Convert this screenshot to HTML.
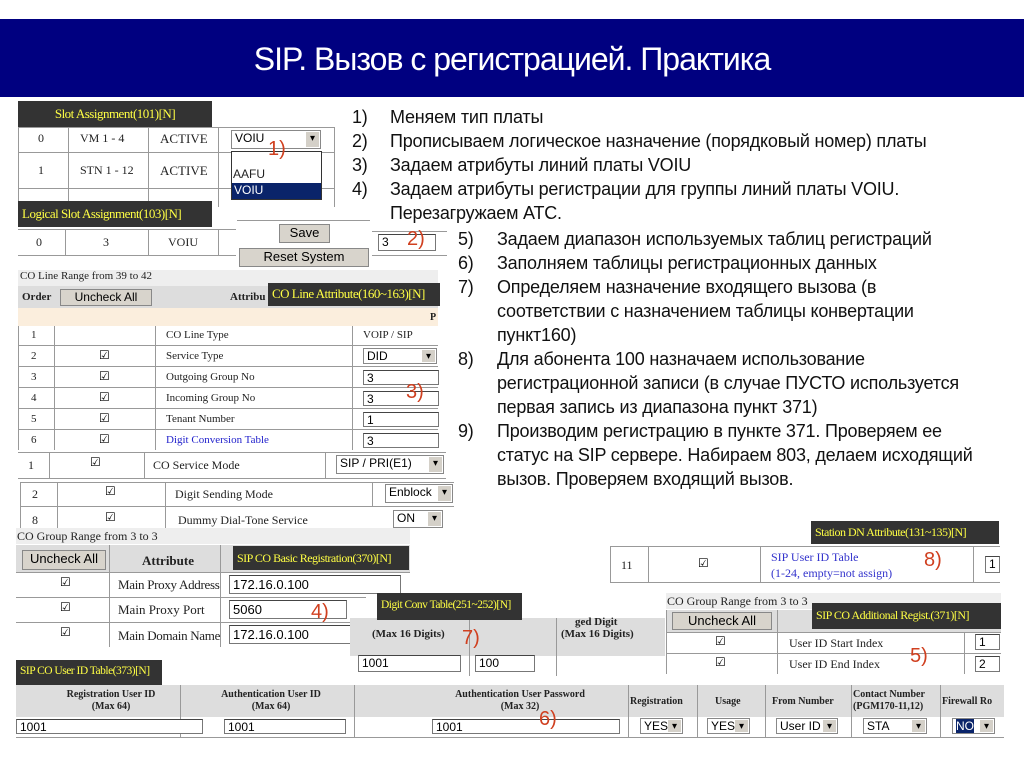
<!DOCTYPE html><html><head><meta charset="utf-8"><style>
body{margin:0;width:1024px;height:767px;background:#fff;position:relative;overflow:hidden;font-family:"Liberation Serif",serif;}
.a{position:absolute;box-sizing:border-box}
.lab{position:absolute;background:#333;color:#ffff44;font:13px "Liberation Serif",serif;padding:3px 4px;white-space:nowrap;box-sizing:border-box;letter-spacing:-0.5px;overflow:hidden}
.t{position:absolute;font:12px "Liberation Serif",serif;color:#222;white-space:nowrap}
.s{position:absolute;font:12px "Liberation Sans",sans-serif;color:#222;white-space:nowrap}
.in{position:absolute;border:1px solid #777;border-top-color:#444;background:#fff;font:12px "Liberation Sans",sans-serif;padding-left:3px;box-sizing:border-box;line-height:14px}
.sel{position:absolute;border:1px solid #888;background:#fff;font:12px "Liberation Sans",sans-serif;padding-left:3px;box-sizing:border-box;line-height:14px}
.sel:after{content:"▾";position:absolute;right:1px;top:1px;width:13px;height:calc(100% - 2px);background:#d4d0c8;font-size:10px;text-align:center;line-height:14px;color:#000}
.btn{position:absolute;background:#d8d4cc;border:1px solid #888;font:13px "Liberation Sans",sans-serif;text-align:center;box-sizing:border-box}
.hl{position:absolute;height:1px;background:#999}
.vl{position:absolute;width:1px;background:#999}
.cb{position:absolute;font:12px "DejaVu Sans",sans-serif}
.r{position:absolute;color:#d04020;font:20px "Liberation Sans",sans-serif}
.txt{position:absolute;font:18px "Liberation Sans",sans-serif;color:#111;line-height:24px;white-space:nowrap;letter-spacing:-0.2px}
.gr{position:absolute;background:#ddd}
</style></head><body>
<div class="a" style="left:0;top:19px;width:1024px;height:78px;background:#000080"></div>
<div class="a" style="left:0;top:41px;width:1024px;text-align:center;color:#fff;font:32px 'Liberation Sans',sans-serif;letter-spacing:-1px">SIP. Вызов с регистрацией. Практика</div>

<!-- right text -->
<div class="txt" style="left:352px;top:105px">1)<br>2)<br>3)<br>4)</div>
<div class="txt" style="left:390px;top:105px">Меняем тип платы<br>Прописываем логическое назначение (порядковый номер) платы<br>Задаем атрибуты линий платы VOIU<br>Задаем атрибуты регистрации для группы линий платы VOIU.<br>Перезагружаем АТС.</div>
<div class="txt" style="left:458px;top:227px">5)<br>6)<br>7)<br><br><br>8)<br><br><br>9)</div>
<div class="txt" style="left:497px;top:227px">Задаем диапазон используемых таблиц регистраций<br>Заполняем таблицы регистрационных данных<br>Определяем назначение входящего вызова (в<br>соответствии с назначением таблицы конвертации<br>пункт160)<br>Для абонента 100 назначаем использование<br>регистрационной записи (в случае ПУСТО используется<br>первая запись из диапазона пункт 371)<br>Производим регистрацию в пункте 371. Проверяем ее<br>статус на SIP сервере. Набираем 803, делаем исходящий<br>вызов. Проверяем входящий вызов.</div>

<!-- slot assignment -->
<div class="lab" style="left:18px;top:101px;width:194px;height:26px;text-align:center;padding-top:5px">Slot Assignment(101)[N]</div>
<div class="hl" style="left:18px;top:127px;width:317px"></div>
<div class="hl" style="left:18px;top:152px;width:317px"></div>
<div class="hl" style="left:18px;top:188px;width:317px"></div>
<div class="vl" style="left:18px;top:127px;height:80px"></div>
<div class="vl" style="left:68px;top:127px;height:80px"></div>
<div class="vl" style="left:148px;top:127px;height:80px"></div>
<div class="vl" style="left:218px;top:127px;height:80px"></div>
<div class="vl" style="left:334px;top:127px;height:80px"></div>
<div class="t" style="left:38px;top:131px">0</div><div class="t" style="left:80px;top:131px">VM 1 - 4</div><div class="t" style="left:160px;top:131px;font-size:13px">ACTIVE</div>
<div class="t" style="left:38px;top:163px">1</div><div class="t" style="left:80px;top:163px">STN 1 - 12</div><div class="t" style="left:160px;top:163px;font-size:13px">ACTIVE</div>
<div class="sel" style="left:231px;top:130px;width:90px;height:19px">VOIU</div>
<div class="a" style="left:231px;top:151px;width:91px;height:49px;border:1px solid #333;background:#fff"></div>
<div class="s" style="left:233px;top:167px">AAFU</div>
<div class="a" style="left:232px;top:183px;width:89px;height:16px;background:#0a246a;color:#fff;font:12px 'Liberation Sans',sans-serif;padding-left:2px">VOIU</div>
<div class="r" style="left:268px;top:138px">1)</div>

<div class="lab" style="left:18px;top:201px;width:194px;height:26px;padding-top:5px">Logical Slot Assignment(103)[N]</div>
<div class="hl" style="left:18px;top:229px;width:218px"></div>
<div class="hl" style="left:18px;top:255px;width:218px"></div>
<div class="vl" style="left:65px;top:229px;height:26px"></div><div class="vl" style="left:148px;top:229px;height:26px"></div><div class="vl" style="left:218px;top:229px;height:26px"></div>
<div class="t" style="left:36px;top:235px">0</div><div class="t" style="left:103px;top:235px">3</div><div class="t" style="left:168px;top:235px">VOIU</div>
<div class="hl" style="left:237px;top:220px;width:133px"></div>
<div class="btn" style="left:279px;top:224px;width:51px;height:19px">Save</div>
<div class="btn" style="left:239px;top:248px;width:130px;height:19px">Reset System</div>
<div class="hl" style="left:372px;top:231px;width:75px"></div>
<div class="hl" style="left:372px;top:255px;width:75px"></div>
<div class="in" style="left:378px;top:234px;width:58px;height:17px">3</div>
<div class="r" style="left:407px;top:228px">2)</div>

<!-- CO line range -->
<div class="gr" style="left:18px;top:270px;width:420px;height:16px;background:#eee"></div>
<div class="t" style="left:20px;top:270px;font-size:11px">CO Line Range from 39 to 42</div>
<div class="gr" style="left:18px;top:286px;width:420px;height:22px;background:#ddd"></div>
<div class="t" style="left:22px;top:291px;font-weight:bold;font-size:11px">Order</div>
<div class="btn" style="left:60px;top:289px;width:92px;height:17px;font-size:12px">Uncheck All</div>
<div class="t" style="left:230px;top:291px;font-weight:bold;font-size:11px">Attribu</div>
<div class="lab" style="left:268px;top:283px;width:172px;height:23px;font-size:13px;padding-top:3px">CO Line Attribute(160~163)[N]</div>
<div class="a" style="left:18px;top:308px;width:420px;height:18px;background:#fbeedd"></div>
<div class="t" style="left:430px;top:312px;font-weight:bold;font-size:10px">P</div>
<div class="vl" style="left:18px;top:326px;height:124px"></div>
<div class="vl" style="left:54px;top:326px;height:124px"></div>
<div class="vl" style="left:155px;top:326px;height:124px"></div>
<div class="vl" style="left:352px;top:326px;height:124px"></div>
<div class="hl" style="left:18px;top:345px;width:420px"></div>
<div class="hl" style="left:18px;top:366px;width:420px"></div>
<div class="hl" style="left:18px;top:387px;width:420px"></div>
<div class="hl" style="left:18px;top:408px;width:420px"></div>
<div class="hl" style="left:18px;top:429px;width:420px"></div>
<div class="t" style="left:31px;top:329px;font-size:11px">1</div><div class="t" style="left:166px;top:329px;font-size:11px">CO Line Type</div><div class="t" style="left:363px;top:329px;font-size:11px">VOIP / SIP</div>
<div class="t" style="left:31px;top:350px;font-size:11px">2</div><div class="cb" style="left:99px;top:348px">☑</div><div class="t" style="left:166px;top:350px;font-size:11px">Service Type</div><div class="sel" style="left:363px;top:348px;width:74px;height:16px">DID</div>
<div class="t" style="left:31px;top:371px;font-size:11px">3</div><div class="cb" style="left:99px;top:369px">☑</div><div class="t" style="left:166px;top:371px;font-size:11px">Outgoing Group No</div><div class="in" style="left:363px;top:370px;width:76px;height:15px">3</div>
<div class="t" style="left:31px;top:392px;font-size:11px">4</div><div class="cb" style="left:99px;top:390px">☑</div><div class="t" style="left:166px;top:392px;font-size:11px">Incoming Group No</div><div class="in" style="left:363px;top:391px;width:76px;height:15px">3</div>
<div class="t" style="left:31px;top:413px;font-size:11px">5</div><div class="cb" style="left:99px;top:411px">☑</div><div class="t" style="left:166px;top:413px;font-size:11px">Tenant Number</div><div class="in" style="left:363px;top:412px;width:76px;height:15px">1</div>
<div class="t" style="left:31px;top:434px;font-size:11px">6</div><div class="cb" style="left:99px;top:432px">☑</div><div class="t" style="left:166px;top:434px;font-size:11px;color:#22c">Digit Conversion Table</div><div class="in" style="left:363px;top:433px;width:76px;height:15px">3</div>
<div class="r" style="left:406px;top:381px">3)</div>

<div class="hl" style="left:18px;top:452px;width:428px"></div><div class="hl" style="left:18px;top:478px;width:428px"></div>
<div class="vl" style="left:49px;top:452px;height:26px"></div><div class="vl" style="left:144px;top:452px;height:26px"></div><div class="vl" style="left:325px;top:452px;height:26px"></div>
<div class="t" style="left:28px;top:458px">1</div><div class="cb" style="left:90px;top:455px">☑</div><div class="t" style="left:153px;top:458px">CO Service Mode</div><div class="sel" style="left:336px;top:455px;width:108px;height:19px">SIP / PRI(E1)</div>
<div class="hl" style="left:20px;top:482px;width:434px"></div><div class="hl" style="left:20px;top:506px;width:434px"></div>
<div class="vl" style="left:20px;top:482px;height:46px"></div><div class="vl" style="left:57px;top:482px;height:46px"></div><div class="vl" style="left:165px;top:482px;height:46px"></div><div class="vl" style="left:372px;top:482px;height:24px"></div>
<div class="t" style="left:32px;top:487px">2</div><div class="cb" style="left:105px;top:484px">☑</div><div class="t" style="left:175px;top:487px">Digit Sending Mode</div><div class="sel" style="left:385px;top:484px;width:68px;height:19px">Enblock</div>
<div class="t" style="left:32px;top:513px">8</div><div class="cb" style="left:105px;top:510px">☑</div><div class="t" style="left:178px;top:513px">Dummy Dial-Tone Service</div><div class="sel" style="left:393px;top:510px;width:50px;height:18px">ON</div>

<!-- CO group / 370 -->
<div class="a" style="left:16px;top:528px;width:394px;height:16px;background:#eee"></div>
<div class="t" style="left:17px;top:529px">CO Group Range from 3 to 3</div>
<div class="a" style="left:16px;top:545px;width:394px;height:27px;background:#ddd"></div>
<div class="btn" style="left:22px;top:550px;width:84px;height:20px">Uncheck All</div>
<div class="t" style="left:142px;top:553px;font-weight:bold;font-size:13px">Attribute</div>
<div class="lab" style="left:233px;top:546px;width:176px;height:24px;font-size:12px;padding-top:5px">SIP CO Basic Registration(370)[N]</div>
<div class="hl" style="left:16px;top:572px;width:394px"></div><div class="hl" style="left:16px;top:597px;width:350px"></div><div class="hl" style="left:16px;top:622px;width:350px"></div>
<div class="vl" style="left:109px;top:545px;height:102px"></div><div class="vl" style="left:220px;top:545px;height:102px"></div>
<div class="cb" style="left:60px;top:575px">☑</div><div class="t" style="left:118px;top:577px;font-size:13px;letter-spacing:-0.3px">Main Proxy Address</div><div class="in" style="left:229px;top:575px;width:172px;height:19px;font-size:13px;line-height:17px">172.16.0.100</div>
<div class="cb" style="left:60px;top:600px">☑</div><div class="t" style="left:118px;top:602px;font-size:13px">Main Proxy Port</div><div class="in" style="left:229px;top:600px;width:118px;height:19px;font-size:13px;line-height:17px">5060</div>
<div class="cb" style="left:60px;top:625px">☑</div><div class="t" style="left:118px;top:628px;font-size:13px;letter-spacing:-0.3px">Main Domain Name</div><div class="in" style="left:229px;top:625px;width:130px;height:19px;font-size:13px;line-height:17px">172.16.0.100</div>
<div class="r" style="left:311px;top:601px">4)</div>

<!-- digit conv -->
<div class="a" style="left:350px;top:618px;width:315px;height:38px;background:#ddd"></div>
<div class="a" style="left:350px;top:656px;width:315px;height:20px;background:#fff"></div>
<div class="vl" style="left:469px;top:618px;height:58px"></div><div class="vl" style="left:556px;top:618px;height:58px"></div>
<div class="lab" style="left:377px;top:593px;width:145px;height:27px;font-size:11.5px;padding-top:6px">Digit Conv Table(251~252)[N]</div>
<div class="t" style="left:372px;top:628px;font-size:11px;font-weight:bold">(Max 16 Digits)</div>
<div class="t" style="left:575px;top:616px;font-size:11px;font-weight:bold">ged Digit</div>
<div class="t" style="left:561px;top:628px;font-size:11px;font-weight:bold">(Max 16 Digits)</div>
<div class="in" style="left:358px;top:655px;width:103px;height:17px">1001</div>
<div class="in" style="left:475px;top:655px;width:60px;height:17px">100</div>
<div class="r" style="left:462px;top:627px">7)</div>

<!-- station DN -->
<div class="lab" style="left:811px;top:521px;width:188px;height:23px;font-size:12px;padding-top:4px">Station DN Attribute(131~135)[N]</div>
<div class="a" style="left:610px;top:546px;width:390px;height:37px;border:1px solid #999;border-right:none"></div>
<div class="vl" style="left:648px;top:546px;height:37px"></div><div class="vl" style="left:760px;top:546px;height:37px"></div><div class="vl" style="left:973px;top:546px;height:37px"></div>
<div class="t" style="left:621px;top:558px">11</div><div class="cb" style="left:698px;top:556px">☑</div>
<div class="t" style="left:771px;top:550px;color:#33c">SIP User ID Table</div><div class="t" style="left:771px;top:566px;color:#33c">(1-24, empty=not assign)</div>
<div class="in" style="left:985px;top:556px;width:15px;height:17px">1</div>
<div class="r" style="left:924px;top:549px">8)</div>

<!-- 371 -->
<div class="a" style="left:666px;top:593px;width:335px;height:16px;background:#eee"></div>
<div class="t" style="left:667px;top:594px">CO Group Range from 3 to 3</div>
<div class="a" style="left:666px;top:610px;width:335px;height:23px;background:#ddd"></div>
<div class="btn" style="left:672px;top:612px;width:100px;height:18px">Uncheck All</div>
<div class="lab" style="left:812px;top:603px;width:189px;height:26px;font-size:12px;padding-top:5px">SIP CO Additional Regist.(371)[N]</div>
<div class="hl" style="left:666px;top:632px;width:335px"></div><div class="hl" style="left:666px;top:653px;width:335px"></div>
<div class="vl" style="left:666px;top:610px;height:64px"></div><div class="vl" style="left:777px;top:610px;height:64px"></div><div class="vl" style="left:964px;top:632px;height:42px"></div>
<div class="cb" style="left:715px;top:634px">☑</div><div class="t" style="left:789px;top:636px">User ID Start Index</div><div class="in" style="left:975px;top:634px;width:25px;height:16px">1</div>
<div class="cb" style="left:715px;top:655px">☑</div><div class="t" style="left:789px;top:657px">User ID End Index</div><div class="in" style="left:975px;top:656px;width:25px;height:16px">2</div>
<div class="r" style="left:910px;top:645px">5)</div>

<!-- 373 -->
<div class="lab" style="left:16px;top:660px;width:146px;height:25px;font-size:11.5px;padding-top:5px">SIP CO User ID Table(373)[N]</div>
<div class="a" style="left:16px;top:685px;width:988px;height:32px;background:#ddd"></div>
<div class="hl" style="left:16px;top:737px;width:988px"></div>
<div class="vl" style="left:180px;top:685px;height:53px"></div><div class="vl" style="left:354px;top:685px;height:53px"></div><div class="vl" style="left:628px;top:685px;height:53px"></div><div class="vl" style="left:697px;top:685px;height:53px"></div><div class="vl" style="left:765px;top:685px;height:53px"></div><div class="vl" style="left:851px;top:685px;height:53px"></div><div class="vl" style="left:940px;top:685px;height:53px"></div>
<div class="t" style="left:56px;top:689px;font-size:10px;font-weight:bold;text-align:center;width:110px;line-height:12px">Registration User ID<br>(Max 64)</div>
<div class="t" style="left:216px;top:689px;font-size:10px;font-weight:bold;text-align:center;width:110px;line-height:12px">Authentication User ID<br>(Max 64)</div>
<div class="t" style="left:420px;top:689px;font-size:10px;font-weight:bold;text-align:center;width:200px;line-height:12px">Authentication User Password<br>(Max 32)</div>
<div class="t" style="left:630px;top:696px;font-size:10px;font-weight:bold">Registration</div>
<div class="t" style="left:715px;top:696px;font-size:10px;font-weight:bold">Usage</div>
<div class="t" style="left:772px;top:696px;font-size:10px;font-weight:bold">From Number</div>
<div class="t" style="left:853px;top:689px;font-size:10px;font-weight:bold;line-height:12px">Contact Number<br>(PGM170-11,12)</div>
<div class="t" style="left:942px;top:696px;font-size:10px;font-weight:bold">Firewall Ro</div>
<div class="in" style="left:16px;top:719px;width:187px;height:15px">1001</div>
<div class="in" style="left:224px;top:719px;width:122px;height:15px">1001</div>
<div class="in" style="left:432px;top:719px;width:188px;height:15px">1001</div>
<div class="r" style="left:539px;top:708px">6)</div>
<div class="sel" style="left:640px;top:718px;width:43px;height:16px">YES</div>
<div class="sel" style="left:707px;top:718px;width:43px;height:16px">YES</div>
<div class="sel" style="left:776px;top:718px;width:62px;height:16px">User ID</div>
<div class="sel" style="left:863px;top:718px;width:64px;height:16px">STA</div>
<div class="sel" style="left:952px;top:718px;width:43px;height:16px"><span style="background:#0a246a;color:#fff">NO</span></div>
</body></html>
